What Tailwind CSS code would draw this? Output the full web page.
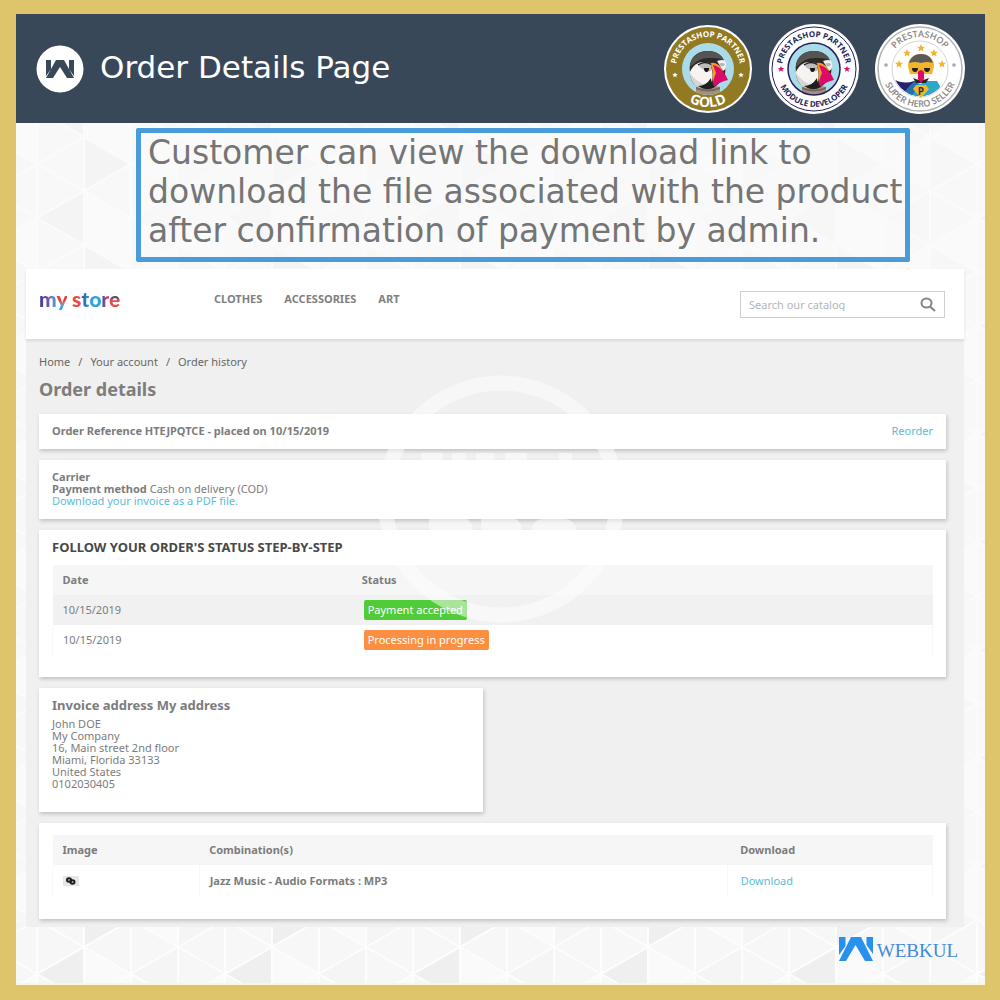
<!DOCTYPE html>
<html lang="en">
<head>
  <meta charset="UTF-8">
  <meta name="viewport" content="width=device-width, initial-scale=1.0">
  <title>Order Details Page</title>
  <script src="https://cdn.jsdelivr.net/npm/@tailwindcss/browser@4"></script>
</head>
<body class="min-h-screen flex flex-col bg-[#dec56b] pt-[14px] pr-[15px] pb-[15px] pl-4 font-['Noto_Sans',sans-serif] text-[11px] leading-3 text-[#7c7c7c]">

  <!-- Shared SVG shapes -->
  <svg class="absolute size-0" aria-hidden="true">
    <defs>
      <path id="star" d="M0-4 1.100-1.300 4-1.200 1.800.7 2.500 3.500 0 1.900-2.500 3.500-1.800.7-4-1.200-1.100-1.300Z"/>
      <path id="arcTop" d="M-32 0A32 32 0 0 1 32 0"/>
      <path id="arcBottom" d="M-38 0A38 38 0 0 0 38 0"/>
      <clipPath id="disc"><circle r="27"/></clipPath>
      <g id="puffin">
        <circle r="26" fill="#a9dbe8"/>
        <path d="M-12 23V18Q0 14 12 18v5Q0 29-12 23Z" fill="#a4917d"/>
        <path d="M-12 18Q0 23 12 18v2Q0 25-12 20Z" fill="#75685c"/>
        <path d="M-18 3C-20-11-11-18 0-18c10 0 16 6 17 14 1 8 0 12-5 17-6 8-15 8-23 4-5-3-7-8-7-14Z" fill="#2b2a29"/>
        <path d="M-18-2C-17-13-10-18 0-18c8 0 14 4 16 9-6-2-10-2-15-2-8 0-12 3-19 9Z" fill="#565451"/>
        <path d="M-18 3C-15-4-8-9-1-6c6 4 7 13 4 20-5 4-11 5-15 2-4-3-6-8-6-13Z" fill="#f6f3f1"/>
        <path d="M-18 4C-17 12-13 17-8 19l8-2Q-12 13-18 4Z" fill="#d9d5d2"/>
        <path d="M-10-4Q-3-9 4-5L3 2Q-4 3-10-4Z" fill="#bcbaba"/>
        <path d="M-10-4Q-3-9 4-4" fill="none" stroke="#222" stroke-width="1.500"/>
        <path d="M-4-1h5Q1 3-1.500 3-4 3-4-1Z" fill="#161616"/>
        <path d="M9-8q8-3 9 2 1 6-3 8Z" fill="#f2f0ef"/>
        <path d="M11-5q3-2 6 0-1 3-4 2Z" fill="#b5b5b5"/>
        <path d="M3-6C8-7 12-3 15 1L7 15C4 13 4 10 5 5Z" fill="#f39a2d"/>
        <path d="M5-4C12-3 17 4 20 11 15 12 10 14 6 18 4 13 6 9 8 4Z" fill="#dc0a68"/>
        <path d="M-10 17q8 0 13-8 0 6 4 9-9 5-17-1Z" fill="#1f1f1f"/>
      </g>
      <path id="webkul" d="M0 0h6.500v9L0 18ZM12 0h10L34 24H26L16.500 8 7 24H0ZM27.500 0H34V17L27.500 8Z"/>
    </defs>
  </svg>

  <header class="flex items-center justify-between bg-[#384858] h-[109px] pl-5 pr-5 shrink-0">
    <div class="flex items-center gap-4">
      <svg class="size-12" viewBox="-24 -24 48 48" role="img" aria-label="Webkul">
        <circle r="23.500" fill="#fff"/>
        <path d="M-14-9h5V0l-5 7ZM-4-9H4L14 9H7L0-2-7 9h-7ZM9-9h5V7L9 0Z" fill="#384858"/>
      </svg>
      <h1 class="pb-1 font-['DejaVu_Sans',sans-serif] text-[31px] leading-9 text-white">Order Details Page</h1>
    </div>
    <div class="flex items-center gap-4">
      <!-- Gold partner -->
      <svg class="size-[90px]" viewBox="-45 -45 90 90" role="img" aria-label="PrestaShop Partner Gold">
        <circle r="44" fill="#fff"/>
        <circle r="42" fill="#917a22"/>
        <use href="#puffin"/>
        <g fill="#fff" font-family="Open Sans, sans-serif" font-weight="bold" text-anchor="middle">
          <text font-size="8"><textPath href="#arcTop" startOffset="50%">PRESTASHOP PARTNER</textPath></text>
          <text font-size="14"><textPath href="#arcBottom" startOffset="50%">GOLD</textPath></text>
          <use href="#star" transform="translate(-33 6) scale(.7)"/>
          <use href="#star" transform="translate(33 6) scale(.7)"/>
        </g>
      </svg>
      <!-- Module developer -->
      <svg class="size-[90px]" viewBox="-45 -45 90 90" role="img" aria-label="PrestaShop Partner Module Developer">
        <circle r="45" fill="#fff"/>
        <circle r="42" fill="none" stroke="#251f5a"/>
        <use href="#puffin"/>
        <circle r="26" fill="none" stroke="#251f5a" stroke-width="1.500"/>
        <g fill="#251f5a" font-family="Open Sans, sans-serif" font-weight="bold" text-anchor="middle" font-size="8">
          <text><textPath href="#arcTop" startOffset="50%">PRESTASHOP PARTNER</textPath></text>
          <text><textPath href="#arcBottom" startOffset="50%">MODULE DEVELOPER</textPath></text>
        </g>
        <g fill="#dc0a68">
          <use href="#star" transform="translate(-33 0) scale(.8)"/>
          <use href="#star" transform="translate(33 0) scale(.8)"/>
        </g>
      </svg>
      <!-- Super hero seller -->
      <svg class="size-[90px]" viewBox="-45 -45 90 90" role="img" aria-label="PrestaShop Super Hero Seller">
        <circle r="45" fill="#fff"/>
        <circle r="42" fill="none" stroke="#b3b3b3" stroke-width="1.500"/>
        <circle r="28" fill="none" stroke="#d5d5d5"/>
        <g clip-path="url(#disc)">
          <path d="M-27 10Q-16 16-6 12L0 16 8 12 17 13 22 24 0 30-24 26Z" fill="#26256a"/>
          <path d="M-13 20-5 12 0 15 8 12 17 12 24 24 14 30H-10Z" fill="#2aa9c9"/>
          <path d="M-15 22-5 12-2 15-8 28Z" fill="#2273b5"/>
        </g>
        <path d="M-12-3C-12-10-7-15 1-15s13 5 13 12c0 9-5 15-13 15S-12 6-12-3Z" fill="#f4f1ef"/>
        <path d="M-12-3C-12-10-7-15 1-15s13 5 13 12L12 5H-10Z" fill="#f3b52c"/>
        <path d="M-11-6C-9-12-5-15 1-15s10 3 12 9Q7-8 1-6-5-8-11-6Z" fill="#5a5a59"/>
        <path d="M-8-1h6Q-2 3-5 3-8 3-8-1ZM4-1h6Q10 3 7 3 4 3 4-1Z" fill="#222"/>
        <path d="M-7 9Q1 13 9 9L6 14H-4Z" fill="#282828"/>
        <path d="M-2 3Q1-1 4 3V10L1 14-2 10Z" fill="#dc0a68"/>
        <path d="M-7 20-4 16H6L9 20 1 29Z" fill="#f3b52c"/>
        <text x="1" y="26" font-family="Open Sans, sans-serif" font-weight="bold" font-size="10" fill="#333" text-anchor="middle">P</text>
        <g fill="#f5b32f">
          <use href="#star" x="-21" y="-5"/>
          <use href="#star" x="-13" y="-16"/>
          <use href="#star" x="1" y="-21"/>
          <use href="#star" x="14" y="-16"/>
          <use href="#star" x="22" y="-5"/>
        </g>
        <g fill="#858585" font-family="Open Sans, sans-serif" font-weight="600" text-anchor="middle" font-size="9">
          <text><textPath href="#arcTop" startOffset="50%">PRESTASHOP</textPath></text>
          <text><textPath href="#arcBottom" startOffset="50%">SUPER HERO SELLER</textPath></text>
        </g>
        <circle cx="-34" cy="-4" r="1.800" fill="#aaa"/>
        <circle cx="34" cy="-4" r="1.800" fill="#aaa"/>
      </svg>
    </div>
  </header>

  <main class="relative isolate flex-1 flex flex-col bg-[#f9f9f9] border-b-2 border-[#fbf6dc] pt-[5px]">
    <!-- Triangle backdrop -->
    <svg class="absolute inset-0 -z-10 size-full" aria-hidden="true">
      <defs>
        <pattern id="tri" x="68" y="68" width="188" height="108" patternUnits="userSpaceOnUse">
          <path d="M0 0h188v108H0Z" fill="#f7f7f7"/>
          <path d="M0 0 47 27V81L0 54ZM94 54l47-27v54ZM47 81l47-27v54Z" fill="#fafafa"/>
          <path d="M94 54V0L47 27ZM94 108V54l47 27Z" fill="#f5f5f5"/>
          <path d="M188 0v54l-47-27ZM0 108V54l47 27Z" fill="#efefef"/>
          <path d="M0 0v108M47 0v108M94 0v108M141 0v108M188 0v108M0 0l188 108M0 54l94 54M94 0l94 54M0 54 94 0M0 108 188 0M94 108l94-54" fill="none" stroke="#fdfdfd" stroke-width="2"/>
        </pattern>
      </defs>
      <rect width="100%" height="100%" fill="url(#tri)"/>
      <rect width="100%" height="800" fill="#fafafa" opacity=".5"/>
    </svg>

    <p class="ml-[120px] mr-[75px] border-[5px] border-[#4a9bd9] rounded-xs bg-[#f9f9f9]/50 pl-[7px] pb-[7px] font-['DejaVu_Sans',sans-serif] text-[33px] leading-[39px] text-[#757575]">
      Customer can view the download link to download the file associated with the product after confirmation of payment by admin.
    </p>

    <!-- Shop window -->
    <section class="relative mt-[7px] ml-[10px] mr-[21px] bg-[#f0f0f0]">
      <div class="flex items-start bg-white pt-[22px] pb-[21px] pl-[13px] pr-[19px] shadow-[0_2px_3px_rgba(0,0,0,0.1)]">
        <a href="#" aria-label="my store" class="w-[175px] font-[Lato,sans-serif] font-black text-[21px] leading-4 whitespace-nowrap"><span class="text-transparent bg-clip-text bg-linear-to-r from-[#2b3a8c] via-[#7a4ba8] to-[#29a5dc] pb-1">m</span><span class="text-transparent bg-clip-text bg-linear-to-b from-[#e0413f] from-50% to-[#29a5dc] to-70% pb-1">y</span> <span class="text-[#ea4c4b]">s</span><span class="text-transparent bg-clip-text bg-linear-to-r from-[#27489c] to-[#29a5dc]">t</span><span class="text-[#29a5dc]">o</span><span class="text-transparent bg-clip-text bg-linear-to-r from-[#3b3f97] to-[#d9447c]">r</span><span class="text-transparent bg-clip-text bg-linear-to-b from-[#2f3566] from-40% to-[#ea4c4b] to-60%">e</span></a>
        <nav class="flex-1 flex gap-[22px] font-bold leading-4 text-[#7f7f7f]">
          <a href="#">CLOTHES</a>
          <a href="#">ACCESSORIES</a>
          <a href="#">ART</a>
        </nav>
        <form class="flex items-center w-[205px] h-[27px] border border-[#cfcfcf] pl-2 pr-2">
          <input type="search" aria-label="Search our catalog" placeholder="Search our catalog" class="flex-1 min-w-0 outline-none placeholder:text-[#b5b5b5]">
          <button type="submit" aria-label="Search">
            <svg class="size-4" viewBox="0 0 16 16" fill="none" stroke="#858585" stroke-width="2"><ellipse cx="6.500" cy="6" rx="5" ry="4.500"/><path d="m10 9.500 5 4.500"/></svg>
          </button>
        </form>
      </div>

      <div class="flex flex-col gap-[11px] pt-[17px] pl-[13px] pr-[18px] pb-2">
        <nav aria-label="Breadcrumb" class="flex gap-2 text-[#666]">
          <a href="#">Home</a><span>/</span><a href="#">Your account</a><span>/</span><a href="#">Order history</a>
        </nav>
        <h2 class="mb-1 text-lg leading-5 font-bold text-[#7d7d7d]">Order details</h2>

        <div class="flex justify-between bg-white pt-[11px] pb-3 px-[13px] shadow-[1px_2px_4px_rgba(0,0,0,0.2)]">
          <strong>Order Reference HTEJPQTCE - placed on 10/15/2019</strong>
          <a href="#" class="text-[#5bbcd6]">Reorder</a>
        </div>

        <div class="bg-white pt-[11px] pb-3 px-[13px] shadow-[1px_2px_4px_rgba(0,0,0,0.2)]">
          <p><strong>Carrier</strong></p>
          <p><strong>Payment method</strong> Cash on delivery (COD)</p>
          <p><a href="#" class="text-[#5bbcd6]">Download your invoice as a PDF file.</a></p>
        </div>

        <div class="bg-white pt-[11px] pb-[22px] px-[13px] shadow-[1px_2px_4px_rgba(0,0,0,0.2)]">
          <h3 class="text-[13px] leading-3 font-bold text-[#484848]">FOLLOW YOUR ORDER'S STATUS STEP-BY-STEP</h3>
          <table class="w-full mt-3 text-left">
            <thead class="bg-[#f6f6f6]">
              <tr><th class="w-[34%] py-[9px] px-[10px]">Date</th><th class="py-[9px] px-[10px]">Status</th></tr>
            </thead>
            <tbody>
              <tr class="bg-[#f1f1f1]">
                <td class="py-[5px] px-[10px]">10/15/2019</td>
                <td class="py-[5px] px-3"><span class="block w-fit rounded-xs bg-[#51cb37] px-1 leading-5 text-white">Payment accepted</span></td>
              </tr>
              <tr class="border-x border-[#f8f8f8]">
                <td class="py-[5px] px-[10px]">10/15/2019</td>
                <td class="py-[5px] px-3"><span class="block w-fit rounded-xs bg-[#fd8f42] px-1 leading-5 text-white">Processing in progress</span></td>
              </tr>
            </tbody>
          </table>
        </div>

        <div class="w-[49%] bg-white pt-[11px] pb-[22px] px-[13px] shadow-[1px_2px_4px_rgba(0,0,0,0.2)]">
          <h3 class="text-[13px] leading-3 font-bold">Invoice address My address</h3>
          <address class="mt-[7px] not-italic">
            John DOE<br>My Company<br>16, Main street 2nd floor<br>Miami, Florida 33133<br>United States<br>0102030405
          </address>
        </div>

        <div class="bg-white pt-3 pb-[22px] px-[13px] shadow-[1px_2px_4px_rgba(0,0,0,0.2)]">
          <table class="w-full text-left">
            <thead class="bg-[#f6f6f6]">
              <tr>
                <th class="w-1/6 py-[9px] px-[10px]">Image</th>
                <th class="w-3/5 py-[9px] px-[10px]">Combination(s)</th>
                <th class="py-[9px] px-[13px]">Download</th>
              </tr>
            </thead>
            <tbody>
              <tr class="border-x border-[#f8f8f8]">
                <td class="py-[10px] px-[10px] border-r border-[#f8f8f8]">
                  <svg class="w-4 h-3" viewBox="0 0 16 12" role="img" aria-label="Jazz Music">
                    <path d="M0 1h16v10H0Z" fill="#e6e6e6"/>
                    <g fill="none" stroke="#1d1d1d" stroke-width="2"><ellipse cx="6" cy="5" rx="2" ry="1.800"/><ellipse cx="9.500" cy="7" rx="2" ry="1.800"/></g>
                  </svg>
                </td>
                <td class="py-[10px] px-[10px] border-r border-[#f8f8f8]"><strong>Jazz Music - Audio Formats : MP3</strong></td>
                <td class="py-[10px] px-[13px]"><a href="#" class="text-[#5bbcd6]">Download</a></td>
              </tr>
            </tbody>
          </table>
        </div>
      </div>

      <!-- Watermark over the window -->
      <svg class="absolute top-[105px] left-1/2 -translate-x-1/2 ml-[6px] size-[250px] pointer-events-none" viewBox="-125 -125 250 250" aria-hidden="true" opacity=".5">
        <circle r="116" fill="none" stroke="#fff" stroke-width="15"/>
        <path d="M-80-46h22V-20h-22ZM-49-46h14V-20h-14ZM-25-46h18V-20h-18ZM4-46h22V-20H4ZM58-46h13V-20H58ZM-72 32V20h38q6 4 6 12ZM-20 32V20h35q6 4 6 12ZM30 32q2-12 12-12h22q9 0 12 12Z" fill="#fff"/>
      </svg>
    </section>

    <footer class="flex justify-end pt-2 pr-[27px]">
      <a href="#" class="flex items-center gap-1 text-[#4389dc] font-['Liberation_Serif',serif] text-[19px] leading-6">
        <svg class="w-[34px] h-6" viewBox="0 0 34 24" fill="#2791ec" aria-hidden="true"><use href="#webkul"/></svg>
        <span class="pt-1">WEBKUL</span>
      </a>
    </footer>
  </main>
</body>
</html>
